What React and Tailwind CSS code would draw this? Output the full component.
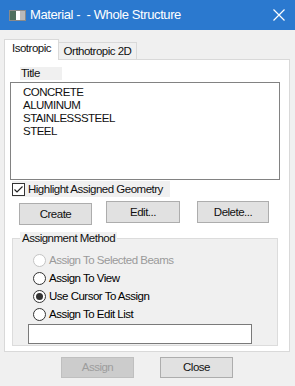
import React from "react";

const font = { fontFamily: '"Liberation Sans", Arial, sans-serif' };

function Radio({ label, checked, disabled }) {
  return (
    <div className="flex items-center h-[18px]">
      <span
        className={`w-[13px] h-[13px] rounded-full border flex items-center justify-center bg-white shrink-0 ${
          disabled ? "border-[#c4c4c4]" : "border-[#333333]"
        }`}
      >
        {checked && <span className="w-[7px] h-[7px] rounded-full bg-[#333333]" />}
      </span>
      <span className={`ml-[3px] ${disabled ? "text-[#9a9a9a]" : "text-black"}`}>{label}</span>
    </div>
  );
}

export default function App() {
  return (
    <div
      className="w-[295px] h-[386px] bg-[#f0f0f0] flex flex-col overflow-hidden text-[11.5px] leading-[13px] tracking-[-0.5px] whitespace-nowrap text-[#111]"
      style={font}
    >
      {/* Title bar */}
      <div className="h-[30px] bg-[#2b79cf] flex items-center text-white shrink-0">
        <svg width="17" height="11" viewBox="0 0 17 11" className="ml-[9px] shrink-0">
          <rect x="0.5" y="0.5" width="16" height="10" fill="#e8e8e8" stroke="#8a8a8a" />
          <rect x="1" y="1" width="6" height="9" fill="#4f6f5e" />
          <rect x="7" y="1" width="4" height="9" fill="#ffffff" />
          <rect x="11" y="1" width="5" height="9" fill="#b9b9b9" />
        </svg>
        <span className="ml-[4px] text-[13px] leading-[16px] tracking-[-0.4px]">Material -&nbsp; - Whole Structure</span>
        <svg width="12" height="12" viewBox="0 0 12 12" className="ml-auto mr-[10px] shrink-0">
          <path d="M0.5 0.5 L11.5 11.5 M11.5 0.5 L0.5 11.5" stroke="white" strokeWidth="1.2" />
        </svg>
      </div>

      {/* Tabs */}
      <div className="pl-[4px] pr-[5px] pt-[9px]">
        <div className="flex items-end h-[21px] relative z-10">
          <div className="w-[55px] h-[21px] bg-white border border-[#d9d9d9] border-b-0 flex items-center justify-center pb-[4px]">
            Isotropic
          </div>
          <div className="w-[78px] h-[18px] bg-[#f0f0f0] border border-[#d9d9d9] border-l-0 flex items-center justify-center">
            Orthotropic 2D
          </div>
        </div>
        <div className="h-[293px] bg-white border border-[#d9d9d9] -mt-[1px] pt-[7px] pl-[5px] pr-[9px] flex flex-col">
          <div className="ml-[10px] w-[42px] h-[13px] bg-[#f0f0f0] pl-[1px]">Title</div>
          <div className="mt-[2px] h-[98px] border border-[#828282] bg-white pl-[12px] pt-[3px]">
            <div>CONCRETE</div>
            <div>ALUMINUM</div>
            <div>STAINLESSSTEEL</div>
            <div>STEEL</div>
          </div>
          <div className="mt-[1px] ml-[2px] w-[158px] h-[16px] bg-[#f0f0f0] flex items-center">
            <span className="w-[13px] h-[13px] border border-[#333333] bg-white flex items-center justify-center shrink-0">
              <svg width="11" height="11" viewBox="0 0 11 11">
                <path d="M1.5 5.5 L4 8 L9.5 2.5" stroke="#222" strokeWidth="1.2" fill="none" />
              </svg>
            </span>
            <span className="ml-[3px]">Highlight Assigned Geometry</span>
          </div>
          <div className="flex items-start mt-[4px]">
            <button className="mt-[2px] ml-[9px] w-[73px] h-[22px] bg-[#e1e1e1] border border-[#adadad] text-[#111]">
              Create
            </button>
            <button className="ml-[14px] w-[74px] h-[22px] bg-[#e1e1e1] border border-[#adadad] text-[#111]">
              Edit...
            </button>
            <button className="ml-[17px] w-[72px] h-[22px] bg-[#e1e1e1] border border-[#adadad] text-[#111]">
              Delete...
            </button>
          </div>
          <div className="mt-[13px] ml-[2px] mr-[2px] h-[108px] border border-[#dcdcdc] bg-[#f0f0f0] relative pl-[20px] pt-[12px]">
            <div className="absolute -top-[7px] left-[7px] px-[2px] bg-[#f0f0f0]">Assignment Method</div>
            <Radio label="Assign To Selected Beams" disabled />
            <Radio label="Assign To View" />
            <Radio label="Use Cursor To Assign" checked />
            <Radio label="Assign To Edit List" />
            <div className="mt-[1px] -ml-[5px] w-[224px] h-[20px] border border-[#7a7a7a] bg-white" />
          </div>
        </div>
      </div>

      {/* Bottom buttons */}
      <div className="flex mt-[5px] pl-[61px]">
        <button className="w-[73px] h-[21px] bg-[#cccccc] border border-[#bfbfbf] text-[#9d9d9d]">
          Assign
        </button>
        <button className="ml-[26px] w-[73px] h-[21px] bg-[#e1e1e1] border border-[#adadad] text-[#111]">
          Close
        </button>
      </div>
    </div>
  );
}
